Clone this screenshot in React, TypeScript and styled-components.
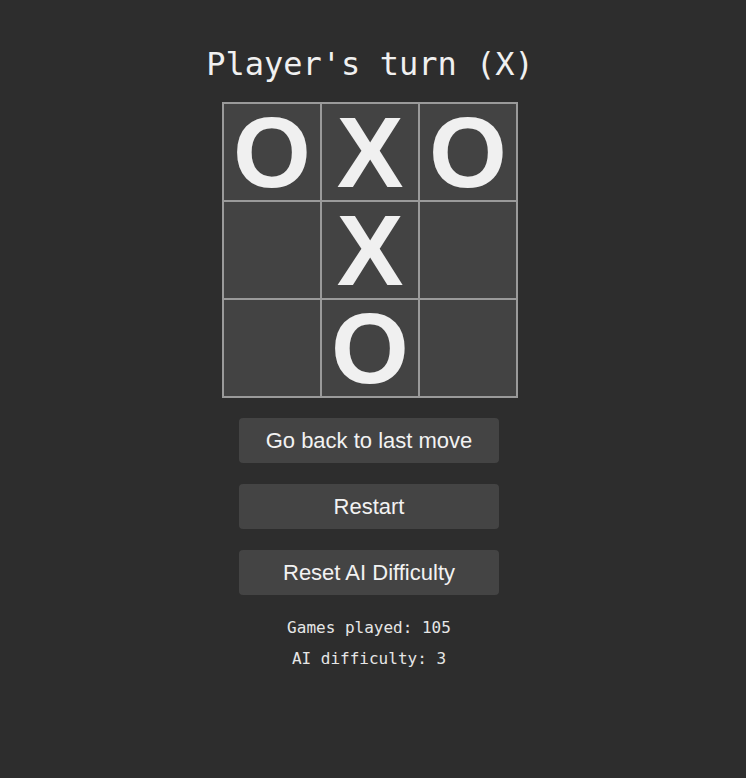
import React, { useState } from 'react';
import styled, { createGlobalStyle } from 'styled-components';

const GlobalStyle = createGlobalStyle`
  html, body {
    margin: 0;
    padding: 0;
    background: #2d2d2d;
    min-height: 100%;
  }
`;

const Page = styled.div`
  display: flex;
  flex-direction: column;
  align-items: center;
  padding: 40px 6px 0 0;
  min-height: 100vh;
  box-sizing: border-box;
  color: #f0f0f0;
`;

const Title = styled.h1`
  margin: 0 0 14px;
  font-family: 'DejaVu Sans Mono', 'Liberation Mono', monospace;
  font-weight: 300;
  font-size: 32px;
  line-height: 48px;
  color: #f0f0f0;
`;

const Board = styled.div`
  display: grid;
  grid-template-columns: repeat(3, 96px);
  grid-template-rows: repeat(3, 96px);
  gap: 2px;
  padding: 2px;
  background: #9a9a9a;
`;

const Cell = styled.div`
  background: #434343;
  display: flex;
  align-items: center;
  justify-content: center;
  font-family: 'Liberation Sans', Arial, sans-serif;
  font-weight: bold;
  font-size: 100px;
  line-height: 96px;
  color: #f0f0f0;
  user-select: none;
`;

const Actions = styled.div`
  display: flex;
  flex-direction: column;
  gap: 21px;
  margin-top: 20px;
  padding-right: 2px;
`;

const Button = styled.button`
  width: 260px;
  height: 45px;
  border: none;
  border-radius: 4px;
  background: #444444;
  color: #f2f2f2;
  font-family: 'Liberation Sans', Arial, sans-serif;
  font-size: 22px;
  cursor: pointer;
`;

const Stats = styled.div`
  margin-top: 17px;
  display: flex;
  flex-direction: column;
  align-items: center;
  font-family: 'DejaVu Sans Mono', 'Liberation Mono', monospace;
  font-size: 16px;
  line-height: 31px;
  color: #e6e6e6;
  padding-right: 2px;
`;

const initial = ['O', 'X', 'O', '', 'X', '', '', 'O', ''];

export default function App() {
  const [cells] = useState<string[]>(initial);

  return (
    <>
      <GlobalStyle />
      <Page>
        <Title>Player's turn (X)</Title>
        <Board>
          {cells.map((c, i) => (
            <Cell key={i}>{c}</Cell>
          ))}
        </Board>
        <Actions>
          <Button>Go back to last move</Button>
          <Button>Restart</Button>
          <Button>Reset AI Difficulty</Button>
        </Actions>
        <Stats>
          <span>Games played: 105</span>
          <span>AI difficulty: 3</span>
        </Stats>
      </Page>
    </>
  );
}
